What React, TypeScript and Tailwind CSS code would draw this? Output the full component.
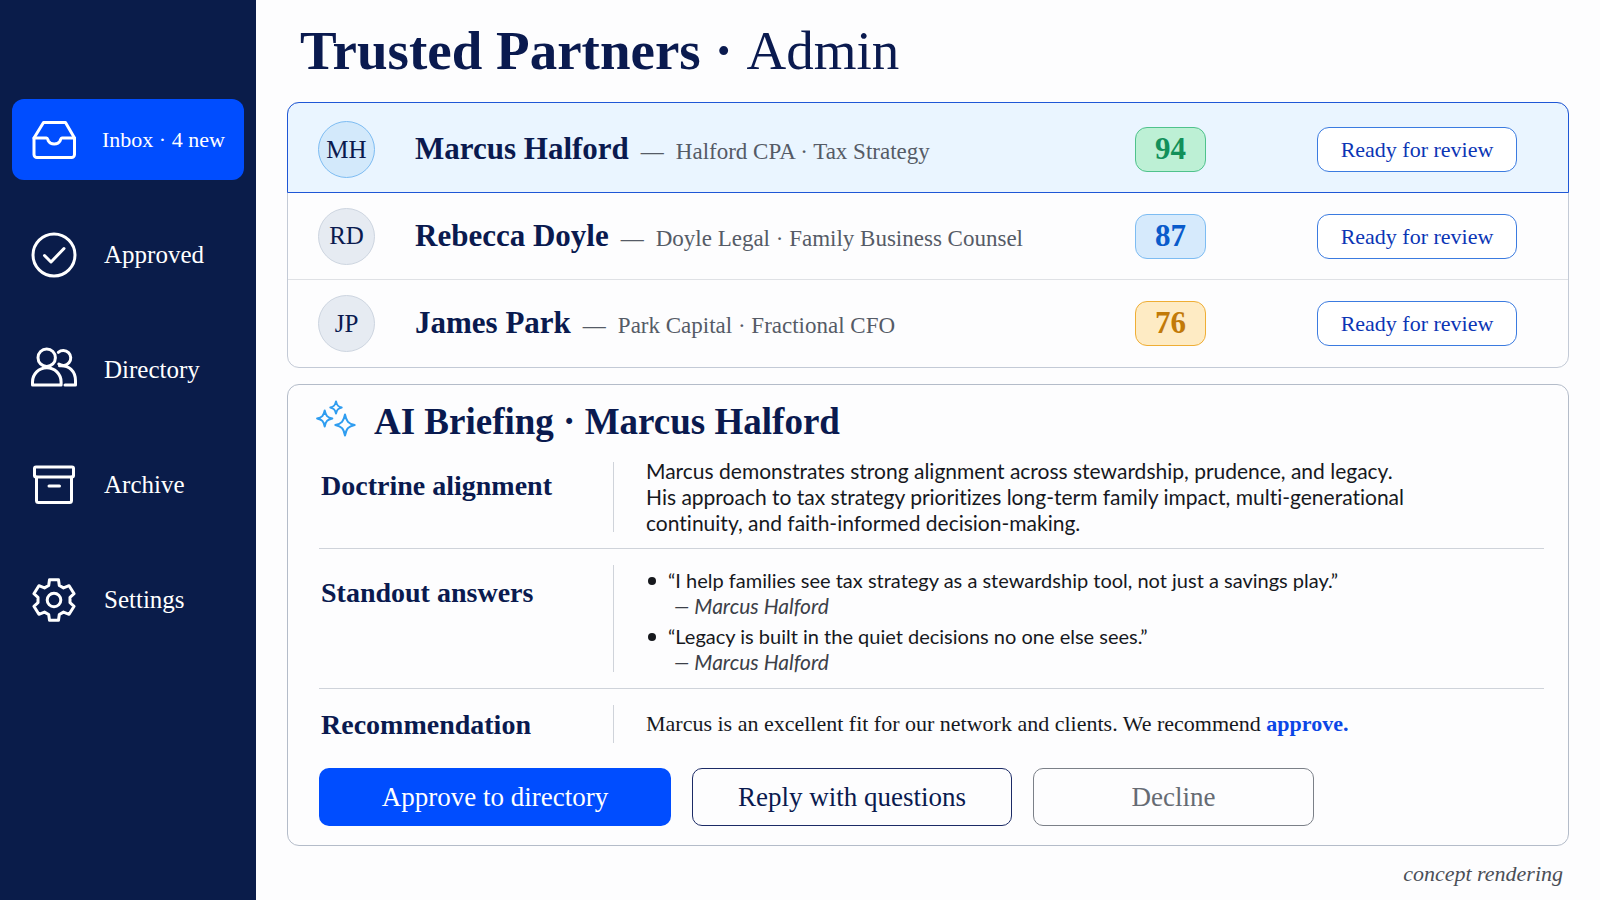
import React, { useState } from 'react';
import clsx from 'clsx';

const partners = [
  {
    initials: 'MH',
    name: 'Marcus Halford',
    detail: 'Halford CPA · Tax Strategy',
    score: 94,
    scoreClass: 'border-[#4fc28c] bg-[#bdf0d5] text-[#12905a]',
  },
  {
    initials: 'RD',
    name: 'Rebecca Doyle',
    detail: 'Doyle Legal · Family Business Counsel',
    score: 87,
    scoreClass: 'border-[#7dbcf2] bg-[#d6eafc] text-[#0a5bcb]',
  },
  {
    initials: 'JP',
    name: 'James Park',
    detail: 'Park Capital · Fractional CFO',
    score: 76,
    scoreClass: 'border-[#efae35] bg-[#feebc4] text-[#c27a08]',
  },
];

const quotes = [
  '“I help families see tax strategy as a stewardship tool, not just a savings play.”',
  '“Legacy is built in the quiet decisions no one else sees.”',
];

function NavIcon({ children }: { children: React.ReactNode }) {
  return (
    <svg
      viewBox="0 0 48 48"
      className="w-12 h-12 shrink-0"
      fill="none"
      stroke="currentColor"
      strokeWidth="3"
      strokeLinecap="round"
      strokeLinejoin="round"
      aria-hidden="true"
    >
      {children}
    </svg>
  );
}

const navItems = [
  {
    label: 'Inbox · 4 new',
    icon: (
      <NavIcon>
        <path d="M4 22 13.500 6.500h22L44.500 22v16.500a3 3 0 0 1-3 3H7a3 3 0 0 1-3-3Z" />
        <path d="M4 22h12.500c1.200 0 1.200 1.500 2 3.200 1 2 3 2.800 5.700 2.800s4.700-.8 5.700-2.800c.8-1.700.8-3.200 2-3.200h12.500" />
      </NavIcon>
    ),
  },
  {
    label: 'Approved',
    icon: (
      <NavIcon>
        <circle cx="24" cy="24" r="21" />
        <path d="m14.500 24.500 6.500 6.500L34 17.500" />
      </NavIcon>
    ),
  },
  {
    label: 'Directory',
    icon: (
      <NavIcon>
        <circle cx="16.700" cy="11.700" r="8.700" />
        <path d="M2.500 39v-3a14.300 14.300 0 0 1 28.600 0v3Z" />
        <path d="M28.300 6.300a7.500 7.500 0 1 1 .5 11.700" />
        <path d="M29.500 19.800c9.500-.8 16 5.500 16 15V39H35" />
      </NavIcon>
    ),
  },
  {
    label: 'Archive',
    icon: (
      <NavIcon>
        <rect x="4.500" y="6" width="39" height="10" rx="1.500" />
        <path d="M6.500 16v23.500a2 2 0 0 0 2 2h31a2 2 0 0 0 2-2V16" />
        <path d="M19 25h10.500" />
      </NavIcon>
    ),
  },
  {
    label: 'Settings',
    icon: (
      <NavIcon>
        <circle cx="24" cy="24" r="6.800" />
        <path d="M19.500 3.800h9l.8 5.700 4.200 2.400 5.600-2.200 5 8-4.100 3.600v5.400l4.100 3.600-5 8-5.600-2.200-4.200 2.400-.8 5.700h-9l-.8-5.700-4.200-2.400-5.600 2.200-5-8L8 26.700v-5.400l-4.100-3.600 5-8 5.600 2.200 4.200-2.400Z" />
      </NavIcon>
    ),
  },
];

function Sparkles() {
  return (
    <svg
      viewBox="0 0 40 48"
      className="w-10 h-12 shrink-0"
      fill="none"
      stroke="#2f9df0"
      strokeWidth="2"
      strokeLinejoin="round"
      aria-hidden="true"
    >
      <path d="M20 3.500c.9 3.900 2 5.100 5.700 6-3.700.9-4.800 2.100-5.700 6-.9-3.900-2-5.100-5.700-6 3.700-.9 4.800-2.100 5.700-6Z" />
      <path d="M8.700 12.500c1.100 5.300 2.600 6.900 7.600 8-5 1.100-6.500 2.700-7.600 8-1.100-5.300-2.600-6.900-7.600-8 5-1.100 6.500-2.700 7.600-8Z" />
      <path d="M29 16.500c1.400 7 3.300 9.100 9.700 10.500-6.400 1.400-8.300 3.500-9.700 10.500-1.400-7-3.300-9.100-9.700-10.500 6.400-1.400 8.300-3.500 9.700-10.500Z" />
    </svg>
  );
}

function Section({ title, titleClass, children }: { title: string; titleClass: string; children: React.ReactNode }) {
  return (
    <section className="flex border-t border-[#cfd3da] py-3 first:border-t-0">
      <h3 className={clsx('w-[294px] shrink-0 pl-0.5 text-[28px] leading-8 font-bold text-[#0a1a4f]', titleClass)}>
        {title}
      </h3>
      <div className="my-1 w-px shrink-0 bg-[#cfd3da]" />
      <div className="flex-1 pl-8 text-[#16181d]">{children}</div>
    </section>
  );
}

export default function App() {
  const [active, setActive] = useState('Inbox · 4 new');
  const [selected, setSelected] = useState('MH');

  return (
    <div className="flex min-h-screen bg-[#fdfdfe] font-['Liberation_Serif',serif] text-[#0a1a4f]">
      <aside className="w-64 shrink-0 bg-[#0a1c4a] px-3 pt-[99px]">
        <nav className="flex flex-col gap-[34px]">
          {navItems.map(item => (
            <button
              key={item.label}
              type="button"
              onClick={() => setActive(item.label)}
              className={clsx(
                'flex h-[81px] w-full items-center rounded-xl pl-[18px] whitespace-nowrap text-white',
                active === item.label ? 'gap-6 bg-[#004dff] text-[22px]' : 'gap-[26px] text-[25px]'
              )}
            >
              {item.icon}
              {item.label}
            </button>
          ))}
        </nav>
      </aside>

      <main className="flex-1 px-[31px]">
        <h1 className="pt-4 pl-[13px] text-[55px] leading-[70px] font-bold">
          Trusted Partners · <span className="font-normal">Admin</span>
        </h1>

        <ul className="mt-4 rounded-xl border border-[#c3cad6]">
          {partners.map(p => (
            <li
              key={p.initials}
              onClick={() => setSelected(p.initials)}
              className={clsx(
                'flex items-center pr-[51px] pl-[30px]',
                selected === p.initials
                  ? '-mx-px -mt-px h-[91px] rounded-t-xl border border-[#1f57d6] bg-[#eaf5ff] pt-1'
                  : 'h-[87px] border-b border-[#dfe1e5] last:border-b-0'
              )}
            >
              <div
                className={clsx(
                  'flex h-[57px] w-[57px] shrink-0 items-center justify-center rounded-full border text-[25px]',
                  selected === p.initials ? 'border-[#7dbcf2] bg-[#d3e9fb]' : 'border-[#cdd5e0] bg-[#e6ebf2]'
                )}
              >
                {p.initials}
              </div>
              <div className="flex flex-1 items-baseline gap-3 pl-10 whitespace-nowrap">
                <h2 className="text-[31px] font-bold">{p.name}</h2>
                <span className="text-[23px] text-[#555b66]">—</span>
                <span className="text-[23px] text-[#555b66]">{p.detail}</span>
              </div>
              <div
                className={clsx(
                  'mr-[111px] flex h-[45px] w-[71px] items-center justify-center rounded-xl border text-[31px] font-bold',
                  p.scoreClass
                )}
              >
                {p.score}
              </div>
              <button
                type="button"
                className="h-[45px] w-[200px] rounded-xl border border-[#3b7be0] bg-white text-[22px] text-[#0b35b5]"
              >
                Ready for review
              </button>
            </li>
          ))}
        </ul>

        <div className="mt-4 rounded-xl border border-[#b4bcc9] pr-6 pb-[19px]">
          <div className="flex items-center gap-[18px] pt-[13px] pl-7">
            <Sparkles />
            <h2 className="text-[37px] leading-[48px] font-bold">AI Briefing · Marcus Halford</h2>
          </div>

          <div className="pl-[31px]">
            <Section title="Doctrine alignment" titleClass="pt-3">
              <p className="font-['Lato',sans-serif] text-[21px] leading-[26px] [font-variant-ligatures:none]">
                Marcus demonstrates strong alignment across stewardship, prudence, and legacy.
                <br />
                His approach to tax strategy prioritizes long-term family impact, multi-generational
                <br />
                continuity, and faith-informed decision-making.
              </p>
            </Section>
            <Section title="Standout answers" titleClass="pt-4">
              <ul className="flex flex-col gap-1.5 pt-[7px] pb-0.5 pl-0.5 font-['Lato',sans-serif] text-[20px] leading-[25px] [font-variant-ligatures:none]">
                {quotes.map(q => (
                  <li key={q} className="flex items-start gap-3">
                    <span className="mt-[9px] h-2 w-2 shrink-0 rounded-full bg-[#16181d]" />
                    <div>
                      {q}
                      <p className="pl-1.5 text-[21px] text-[#3c4048] italic">— Marcus Halford</p>
                    </div>
                  </li>
                ))}
              </ul>
            </Section>
            <Section title="Recommendation" titleClass="pt-2">
              <p className="py-[11px] text-[22px] leading-6">
                Marcus is an excellent fit for our network and clients. We recommend{' '}
                <strong className="text-[#0b46e6]">approve.</strong>
              </p>
            </Section>
          </div>

          <div className="flex gap-[21px] pt-[9px] pl-[31px] text-[27px]">
            <button type="button" className="h-[58px] w-[352px] rounded-[10px] bg-[#004dff] text-white">
              Approve to directory
            </button>
            <button type="button" className="h-[58px] w-[320px] rounded-[10px] border border-[#1c2b66]">
              Reply with questions
            </button>
            <button type="button" className="h-[58px] w-[281px] rounded-[10px] border border-[#7b8088] text-[#666b73]">
              Decline
            </button>
          </div>
        </div>

        <p className="pt-[11px] pr-1.5 text-right text-[22px] text-[#4b4f57] italic">concept rendering</p>
      </main>
    </div>
  );
}
